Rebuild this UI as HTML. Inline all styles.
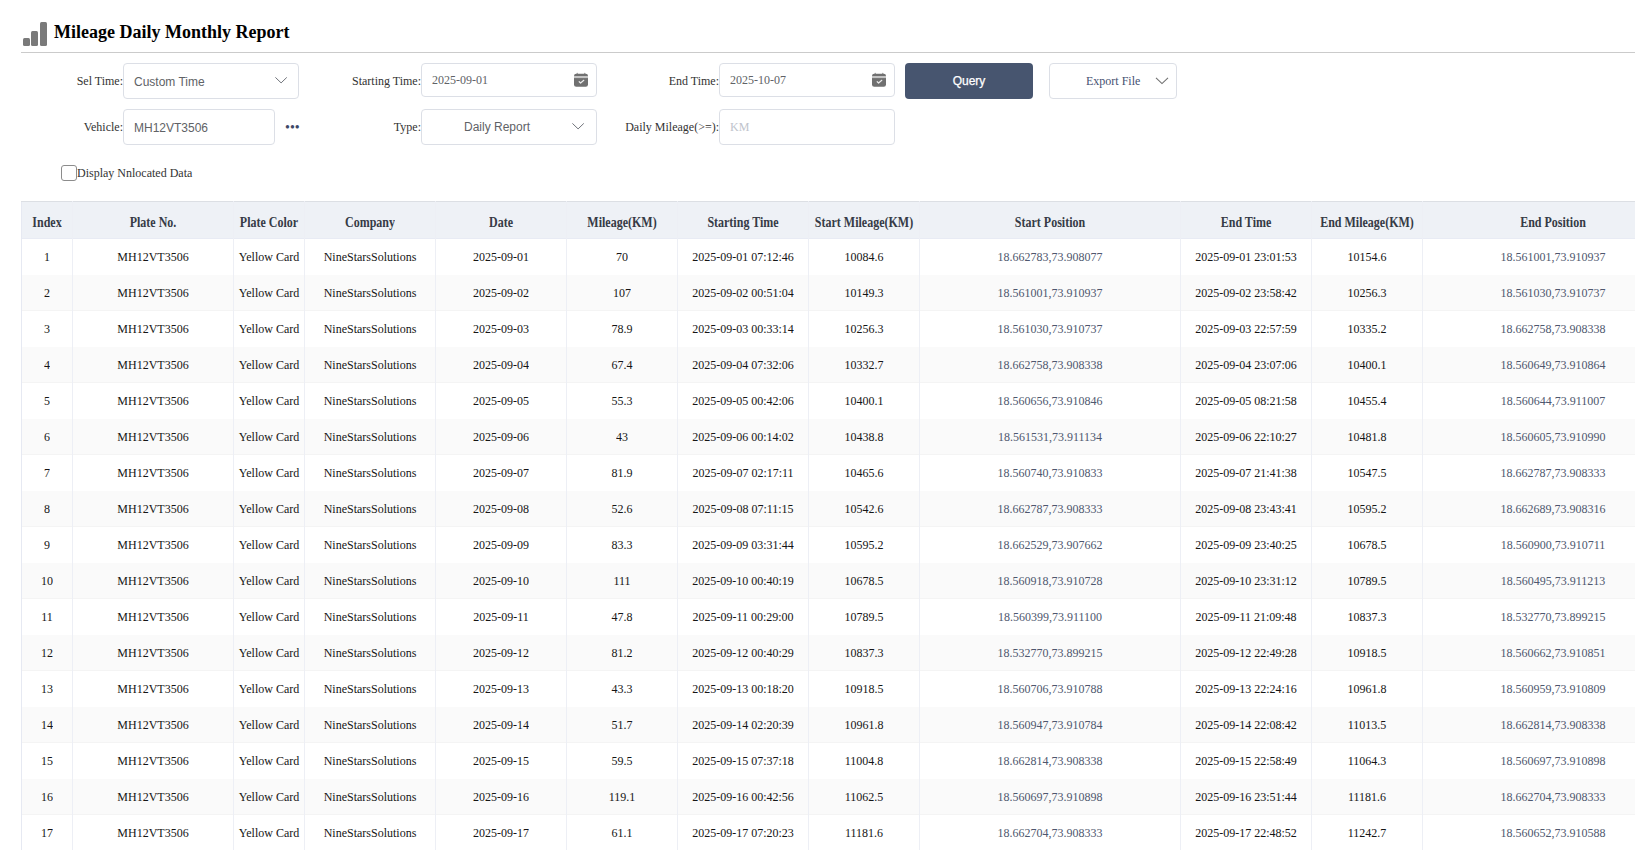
<!DOCTYPE html>
<html><head><meta charset="utf-8">
<style>
*{box-sizing:border-box}
html,body{margin:0;padding:0;background:#fff;overflow:hidden;width:1635px;height:850px}
body{font-family:"Liberation Serif",serif;font-size:12px;color:#000;position:relative}
.abs{position:absolute}
.icon span{position:absolute;background:#7a7a7a;border-radius:1.5px}
.title{position:absolute;left:54px;top:20px;font-weight:bold;font-size:18px;line-height:24px;color:#000;white-space:nowrap}
.hline{position:absolute;left:21px;top:52px;width:1614px;height:1px;background:#cbcbcb}
.lbl{position:absolute;text-align:right;white-space:nowrap;color:#333;font-size:12px;line-height:14px}
.box{position:absolute;border:1px solid #dcdfe6;border-radius:4px;background:#fff}
.sans{font-family:"Liberation Sans",sans-serif}
.val{position:absolute;white-space:nowrap;color:#606266}
.chev{position:absolute}
.btn{position:absolute;background:#47556f;border-radius:4px;color:#fff;text-align:center}
table{position:absolute;left:21px;top:201px;border-collapse:collapse;table-layout:fixed;width:1663px;border-left:1px solid #e6e9f2}
th,td{border-right:1px solid #edeff5;text-align:center;white-space:nowrap;overflow:hidden;padding:0}
th{background:#eef1f6;height:37px;font-weight:bold;color:#363b46;font-size:12px;border-top:1px solid #dcdfe4;padding-top:7px;box-shadow:inset 0 -1px 0 #e8ebf4}
td{height:36px;color:#151515;font-size:12px;padding-top:1px}
tr.s td{background:#fafafa;box-shadow:inset 0 -1px 0 #f4f4f4}
td.p{color:#4e576e}
td i,th i{display:inline-block;font-style:normal;transform:scaleY(1.12);transform-origin:50% 76%}
th i{transform:scaleY(1.16)}
</style></head><body>
<div class="icon">
<span style="left:23px;top:38px;width:7px;height:8px"></span>
<span style="left:31px;top:31px;width:7px;height:15px"></span>
<span style="left:40px;top:22px;width:7px;height:24px"></span>
</div>
<div class="title">Mileage Daily Monthly Report</div>
<div class="hline"></div>

<div class="lbl" style="right:calc(1635px - 123px);top:74px">Sel Time:</div>
<div class="box" style="left:123px;top:63px;width:176px;height:36px"></div>
<div class="val sans" style="left:134px;top:75px;font-size:12px;line-height:15px">Custom Time</div>
<svg class="chev" style="left:275px;top:77px" width="13" height="8" viewBox="0 0 13 8"><path d="M0.4 0.4 L6.1 5.9 L11.8 0.4" fill="none" stroke="#70737a" stroke-width="1"/></svg>

<div class="lbl" style="right:calc(1635px - 421px);top:74px">Starting Time:</div>
<div class="box" style="left:421px;top:63px;width:176px;height:34px"></div>
<div class="val" style="left:432px;top:73px">2025-09-01</div>
<svg class="abs" style="left:574px;top:72px" width="14" height="15" viewBox="0 0 14 15"><rect x="2.6" y="0.8" width="1.3" height="1.6" rx="0.5" fill="#a0a0a0"/><rect x="10.1" y="0.8" width="1.3" height="1.6" rx="0.5" fill="#a0a0a0"/><rect x="0" y="1.8" width="14" height="13" rx="2.2" fill="#707070"/><rect x="0" y="4" width="14" height="2.1" fill="#c4c4c4"/><path d="M5.2 9.7 L6.6 11 L9.8 8.3" fill="none" stroke="#ececec" stroke-width="1.2" stroke-linecap="round" stroke-linejoin="round"/></svg>

<div class="lbl" style="right:calc(1635px - 719px);top:74px">End Time:</div>
<div class="box" style="left:719px;top:63px;width:176px;height:34px"></div>
<div class="val" style="left:730px;top:73px">2025-10-07</div>
<svg class="abs" style="left:872px;top:72px" width="14" height="15" viewBox="0 0 14 15"><rect x="2.6" y="0.8" width="1.3" height="1.6" rx="0.5" fill="#a0a0a0"/><rect x="10.1" y="0.8" width="1.3" height="1.6" rx="0.5" fill="#a0a0a0"/><rect x="0" y="1.8" width="14" height="13" rx="2.2" fill="#707070"/><rect x="0" y="4" width="14" height="2.1" fill="#c4c4c4"/><path d="M5.2 9.7 L6.6 11 L9.8 8.3" fill="none" stroke="#ececec" stroke-width="1.2" stroke-linecap="round" stroke-linejoin="round"/></svg>

<div class="btn sans" style="left:905px;top:63px;width:128px;height:36px;line-height:37px;font-size:12px;-webkit-text-stroke:0.25px #fff">Query</div>
<div class="box" style="left:1049px;top:63px;width:128px;height:36px"></div>
<div class="val" style="left:1086px;top:74px;color:#465172">Export File</div>
<svg class="chev" style="left:1155px;top:77px" width="14" height="8" viewBox="0 0 14 8"><path d="M1 0.8 L7 6.6 L13 0.8" fill="none" stroke="#707070" stroke-width="1.1"/></svg>

<div class="lbl" style="right:calc(1635px - 123px);top:120px">Vehicle:</div>
<div class="box" style="left:123px;top:109px;width:152px;height:36px"></div>
<div class="val sans" style="left:134px;top:121px;font-size:12px;line-height:15px">MH12VT3506</div>
<div class="abs" style="left:285px;top:120px;color:#3d4866;font-size:14px">•••</div>

<div class="lbl" style="right:calc(1635px - 421px);top:120px">Type:</div>
<div class="box" style="left:421px;top:109px;width:176px;height:36px"></div>
<div class="val sans" style="left:464px;top:120px;font-size:12px;line-height:15px">Daily Report</div>
<svg class="chev" style="left:572px;top:123px" width="13" height="8" viewBox="0 0 13 8"><path d="M0.4 0.4 L6.1 5.9 L11.8 0.4" fill="none" stroke="#70737a" stroke-width="1"/></svg>

<div class="lbl" style="right:calc(1635px - 719px);top:120px">Daily Mileage(&gt;=):</div>
<div class="box" style="left:719px;top:109px;width:176px;height:36px"></div>
<div class="val" style="left:730px;top:120px;color:#c0c4cc">KM</div>

<div class="abs" style="left:61px;top:165px;width:16px;height:16px;border:1px solid #8c8c8c;border-radius:3px"></div>
<div class="lbl" style="left:77px;top:166px;text-align:left">Display Nnlocated Data</div>

<table>
<colgroup><col style="width:51px"><col style="width:161px"><col style="width:71px"><col style="width:131px"><col style="width:131px"><col style="width:111px"><col style="width:131px"><col style="width:111px"><col style="width:261px"><col style="width:131px"><col style="width:111px"><col style="width:261px"></colgroup>
<thead><tr><th><i>Index</i></th><th><i>Plate No.</i></th><th><i>Plate Color</i></th><th><i>Company</i></th><th><i>Date</i></th><th><i>Mileage(KM)</i></th><th><i>Starting Time</i></th><th><i>Start Mileage(KM)</i></th><th><i>Start Position</i></th><th><i>End Time</i></th><th><i>End Mileage(KM)</i></th><th><i>End Position</i></th></tr></thead>
<tbody>
<tr><td><i>1</i></td><td><i>MH12VT3506</i></td><td><i>Yellow Card</i></td><td><i>NineStarsSolutions</i></td><td><i>2025-09-01</i></td><td><i>70</i></td><td><i>2025-09-01 07:12:46</i></td><td><i>10084.6</i></td><td class="p"><i>18.662783,73.908077</i></td><td><i>2025-09-01 23:01:53</i></td><td><i>10154.6</i></td><td class="p"><i>18.561001,73.910937</i></td></tr>
<tr class="s"><td><i>2</i></td><td><i>MH12VT3506</i></td><td><i>Yellow Card</i></td><td><i>NineStarsSolutions</i></td><td><i>2025-09-02</i></td><td><i>107</i></td><td><i>2025-09-02 00:51:04</i></td><td><i>10149.3</i></td><td class="p"><i>18.561001,73.910937</i></td><td><i>2025-09-02 23:58:42</i></td><td><i>10256.3</i></td><td class="p"><i>18.561030,73.910737</i></td></tr>
<tr><td><i>3</i></td><td><i>MH12VT3506</i></td><td><i>Yellow Card</i></td><td><i>NineStarsSolutions</i></td><td><i>2025-09-03</i></td><td><i>78.9</i></td><td><i>2025-09-03 00:33:14</i></td><td><i>10256.3</i></td><td class="p"><i>18.561030,73.910737</i></td><td><i>2025-09-03 22:57:59</i></td><td><i>10335.2</i></td><td class="p"><i>18.662758,73.908338</i></td></tr>
<tr class="s"><td><i>4</i></td><td><i>MH12VT3506</i></td><td><i>Yellow Card</i></td><td><i>NineStarsSolutions</i></td><td><i>2025-09-04</i></td><td><i>67.4</i></td><td><i>2025-09-04 07:32:06</i></td><td><i>10332.7</i></td><td class="p"><i>18.662758,73.908338</i></td><td><i>2025-09-04 23:07:06</i></td><td><i>10400.1</i></td><td class="p"><i>18.560649,73.910864</i></td></tr>
<tr><td><i>5</i></td><td><i>MH12VT3506</i></td><td><i>Yellow Card</i></td><td><i>NineStarsSolutions</i></td><td><i>2025-09-05</i></td><td><i>55.3</i></td><td><i>2025-09-05 00:42:06</i></td><td><i>10400.1</i></td><td class="p"><i>18.560656,73.910846</i></td><td><i>2025-09-05 08:21:58</i></td><td><i>10455.4</i></td><td class="p"><i>18.560644,73.911007</i></td></tr>
<tr class="s"><td><i>6</i></td><td><i>MH12VT3506</i></td><td><i>Yellow Card</i></td><td><i>NineStarsSolutions</i></td><td><i>2025-09-06</i></td><td><i>43</i></td><td><i>2025-09-06 00:14:02</i></td><td><i>10438.8</i></td><td class="p"><i>18.561531,73.911134</i></td><td><i>2025-09-06 22:10:27</i></td><td><i>10481.8</i></td><td class="p"><i>18.560605,73.910990</i></td></tr>
<tr><td><i>7</i></td><td><i>MH12VT3506</i></td><td><i>Yellow Card</i></td><td><i>NineStarsSolutions</i></td><td><i>2025-09-07</i></td><td><i>81.9</i></td><td><i>2025-09-07 02:17:11</i></td><td><i>10465.6</i></td><td class="p"><i>18.560740,73.910833</i></td><td><i>2025-09-07 21:41:38</i></td><td><i>10547.5</i></td><td class="p"><i>18.662787,73.908333</i></td></tr>
<tr class="s"><td><i>8</i></td><td><i>MH12VT3506</i></td><td><i>Yellow Card</i></td><td><i>NineStarsSolutions</i></td><td><i>2025-09-08</i></td><td><i>52.6</i></td><td><i>2025-09-08 07:11:15</i></td><td><i>10542.6</i></td><td class="p"><i>18.662787,73.908333</i></td><td><i>2025-09-08 23:43:41</i></td><td><i>10595.2</i></td><td class="p"><i>18.662689,73.908316</i></td></tr>
<tr><td><i>9</i></td><td><i>MH12VT3506</i></td><td><i>Yellow Card</i></td><td><i>NineStarsSolutions</i></td><td><i>2025-09-09</i></td><td><i>83.3</i></td><td><i>2025-09-09 03:31:44</i></td><td><i>10595.2</i></td><td class="p"><i>18.662529,73.907662</i></td><td><i>2025-09-09 23:40:25</i></td><td><i>10678.5</i></td><td class="p"><i>18.560900,73.910711</i></td></tr>
<tr class="s"><td><i>10</i></td><td><i>MH12VT3506</i></td><td><i>Yellow Card</i></td><td><i>NineStarsSolutions</i></td><td><i>2025-09-10</i></td><td><i>111</i></td><td><i>2025-09-10 00:40:19</i></td><td><i>10678.5</i></td><td class="p"><i>18.560918,73.910728</i></td><td><i>2025-09-10 23:31:12</i></td><td><i>10789.5</i></td><td class="p"><i>18.560495,73.911213</i></td></tr>
<tr><td><i>11</i></td><td><i>MH12VT3506</i></td><td><i>Yellow Card</i></td><td><i>NineStarsSolutions</i></td><td><i>2025-09-11</i></td><td><i>47.8</i></td><td><i>2025-09-11 00:29:00</i></td><td><i>10789.5</i></td><td class="p"><i>18.560399,73.911100</i></td><td><i>2025-09-11 21:09:48</i></td><td><i>10837.3</i></td><td class="p"><i>18.532770,73.899215</i></td></tr>
<tr class="s"><td><i>12</i></td><td><i>MH12VT3506</i></td><td><i>Yellow Card</i></td><td><i>NineStarsSolutions</i></td><td><i>2025-09-12</i></td><td><i>81.2</i></td><td><i>2025-09-12 00:40:29</i></td><td><i>10837.3</i></td><td class="p"><i>18.532770,73.899215</i></td><td><i>2025-09-12 22:49:28</i></td><td><i>10918.5</i></td><td class="p"><i>18.560662,73.910851</i></td></tr>
<tr><td><i>13</i></td><td><i>MH12VT3506</i></td><td><i>Yellow Card</i></td><td><i>NineStarsSolutions</i></td><td><i>2025-09-13</i></td><td><i>43.3</i></td><td><i>2025-09-13 00:18:20</i></td><td><i>10918.5</i></td><td class="p"><i>18.560706,73.910788</i></td><td><i>2025-09-13 22:24:16</i></td><td><i>10961.8</i></td><td class="p"><i>18.560959,73.910809</i></td></tr>
<tr class="s"><td><i>14</i></td><td><i>MH12VT3506</i></td><td><i>Yellow Card</i></td><td><i>NineStarsSolutions</i></td><td><i>2025-09-14</i></td><td><i>51.7</i></td><td><i>2025-09-14 02:20:39</i></td><td><i>10961.8</i></td><td class="p"><i>18.560947,73.910784</i></td><td><i>2025-09-14 22:08:42</i></td><td><i>11013.5</i></td><td class="p"><i>18.662814,73.908338</i></td></tr>
<tr><td><i>15</i></td><td><i>MH12VT3506</i></td><td><i>Yellow Card</i></td><td><i>NineStarsSolutions</i></td><td><i>2025-09-15</i></td><td><i>59.5</i></td><td><i>2025-09-15 07:37:18</i></td><td><i>11004.8</i></td><td class="p"><i>18.662814,73.908338</i></td><td><i>2025-09-15 22:58:49</i></td><td><i>11064.3</i></td><td class="p"><i>18.560697,73.910898</i></td></tr>
<tr class="s"><td><i>16</i></td><td><i>MH12VT3506</i></td><td><i>Yellow Card</i></td><td><i>NineStarsSolutions</i></td><td><i>2025-09-16</i></td><td><i>119.1</i></td><td><i>2025-09-16 00:42:56</i></td><td><i>11062.5</i></td><td class="p"><i>18.560697,73.910898</i></td><td><i>2025-09-16 23:51:44</i></td><td><i>11181.6</i></td><td class="p"><i>18.662704,73.908333</i></td></tr>
<tr><td><i>17</i></td><td><i>MH12VT3506</i></td><td><i>Yellow Card</i></td><td><i>NineStarsSolutions</i></td><td><i>2025-09-17</i></td><td><i>61.1</i></td><td><i>2025-09-17 07:20:23</i></td><td><i>11181.6</i></td><td class="p"><i>18.662704,73.908333</i></td><td><i>2025-09-17 22:48:52</i></td><td><i>11242.7</i></td><td class="p"><i>18.560652,73.910588</i></td></tr></tbody></table>
</body></html>
